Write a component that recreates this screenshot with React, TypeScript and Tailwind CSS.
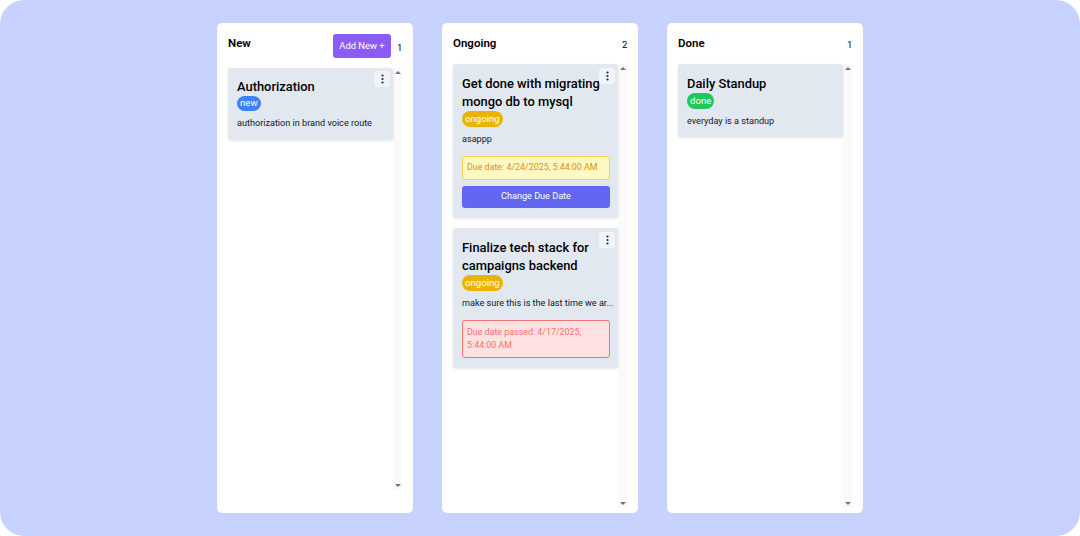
const font = { fontFamily: 'Roboto, sans-serif' };

function Dots() {
  return (
    <svg width="3" height="10" viewBox="0 0 3 10" fill="#1f2937">
      <circle cx="1.5" cy="1.5" r="1.1" />
      <circle cx="1.5" cy="5" r="1.1" />
      <circle cx="1.5" cy="8.5" r="1.1" />
    </svg>
  );
}

function Scrollbar() {
  return (
    <div className="w-[9px] shrink-0 bg-[#fafafa] flex flex-col justify-between items-center py-[3px]">
      <div className="w-0 h-0 border-x-[3px] border-x-transparent border-b-[3px] border-b-[#6b7280]" />
      <div className="w-0 h-0 border-x-[3px] border-x-transparent border-t-[3px] border-t-[#6b7280]" />
    </div>
  );
}

function Badge({ label, color, tight }: { label: string; color: string; tight?: boolean }) {
  return (
    <span className={`self-start rounded-full px-[3px] flex items-center text-[9.6px] text-white ${tight ? "h-[15px]" : "h-4"} ${color}`}>
      {label}
    </span>
  );
}

function Card({
  title,
  badge,
  badgeColor,
  desc,
  menu = true,
  tight,
  children,
}: {
  title: string;
  badge: string;
  badgeColor: string;
  desc: string;
  menu?: boolean;
  tight?: boolean;
  children?: React.ReactNode;
}) {
  return (
    <div className={`relative w-[165px] shrink-0 bg-[#e2e8f0] rounded-[3px] shadow-[0_1px_3px_rgba(0,0,0,0.1)] pl-[9px] pr-[8px] flex flex-col ${tight ? "pt-[10px]" : "pt-[11px]"} ${menu ? "pb-[10px]" : "pb-[9px]"}`}>
      {menu && (
        <button className={`absolute right-[3px] w-[16px] h-[16px] rounded-[3px] bg-[#f1f5f9] flex items-center justify-center ${tight ? "top-[3px]" : "top-[4px]"}`}>
          <Dots />
        </button>
      )}
      <h3 className="text-[12.9px] leading-[18px] font-medium text-black">{title}</h3>
      <Badge label={badge} color={badgeColor} tight={tight} />
      <p className="text-[9.1px] leading-[14px] text-[#111827] mt-[5px] whitespace-nowrap">{desc}</p>
      {children}
    </div>
  );
}

function Column({
  title,
  count,
  button,
  children,
}: {
  title: string;
  count: number;
  button?: boolean;
  children: React.ReactNode;
}) {
  return (
    <div className={`w-[196px] h-[490px] bg-white rounded-[5px] flex flex-col px-[11px] ${button ? "pb-[23px]" : "pb-[5px]"}`}>
      <div className={`flex items-center justify-between shrink-0 ${button ? "h-[45px] pt-[1px]" : "h-[41px]"}`}>
        <span className={`text-[11.5px] font-semibold text-black ${button ? "mb-[4px]" : ""}`}>{title}</span>
        <div className="flex items-center gap-[6px]">
          {button && (
            <button className="w-[58px] h-[24px] rounded-[3px] bg-[#8b5cf6] text-white text-[9.4px]">Add New +</button>
          )}
          <span className="text-[9.5px] text-black w-[5px] text-center mt-[4px]">{count}</span>
        </div>
      </div>
      <div className="flex-1 flex min-h-0">
        <div className="flex flex-col gap-[10px] w-[165px] shrink-0">{children}</div>
        <Scrollbar />
      </div>
    </div>
  );
}

export default function App() {
  return (
    <div style={font} className="w-[1080px] h-[536px] bg-[#c7d2fe] rounded-[24px] flex justify-center gap-[29px] pt-[23px]">
      <Column title="New" count={1} button>
        <Card
          title="Authorization"
          badge="new"
          badgeColor="bg-[#3b82f6]"
          desc="authorization in brand voice route"
          tight
        />
      </Column>
      <Column title="Ongoing" count={2}>
        <Card
          title="Get done with migrating mongo db to mysql"
          badge="ongoing"
          badgeColor="bg-[#eab308]"
          desc="asappp"
        >
          <div className="mt-[10px] h-[24px] rounded-[3px] border border-[#fcd34d] bg-[#fef9c3] px-[4px] flex items-center text-[8.9px] whitespace-nowrap text-[#d9901a]">
            Due date: 4/24/2025, 5:44:00 AM
          </div>
          <button className="mt-[6px] h-[22px] rounded-[3px] bg-[#6366f1] text-white text-[9.1px]">Change Due Date</button>
        </Card>
        <Card
          title="Finalize tech stack for campaigns backend"
          badge="ongoing"
          badgeColor="bg-[#eab308]"
          desc="make sure this is the last time we ar..."
        >
          <div className="mt-[10px] rounded-[3px] border border-[#f87171] bg-[#fee2e2] px-[4px] py-[4.5px] text-[8.9px] leading-[13.5px] text-[#f87171]">
            Due date passed: 4/17/2025, 5:44:00 AM
          </div>
        </Card>
      </Column>
      <Column title="Done" count={1}>
        <Card
          title="Daily Standup"
          badge="done"
          badgeColor="bg-[#22c55e]"
          desc="everyday is a standup"
          menu={false}
        />
      </Column>
    </div>
  );
}
